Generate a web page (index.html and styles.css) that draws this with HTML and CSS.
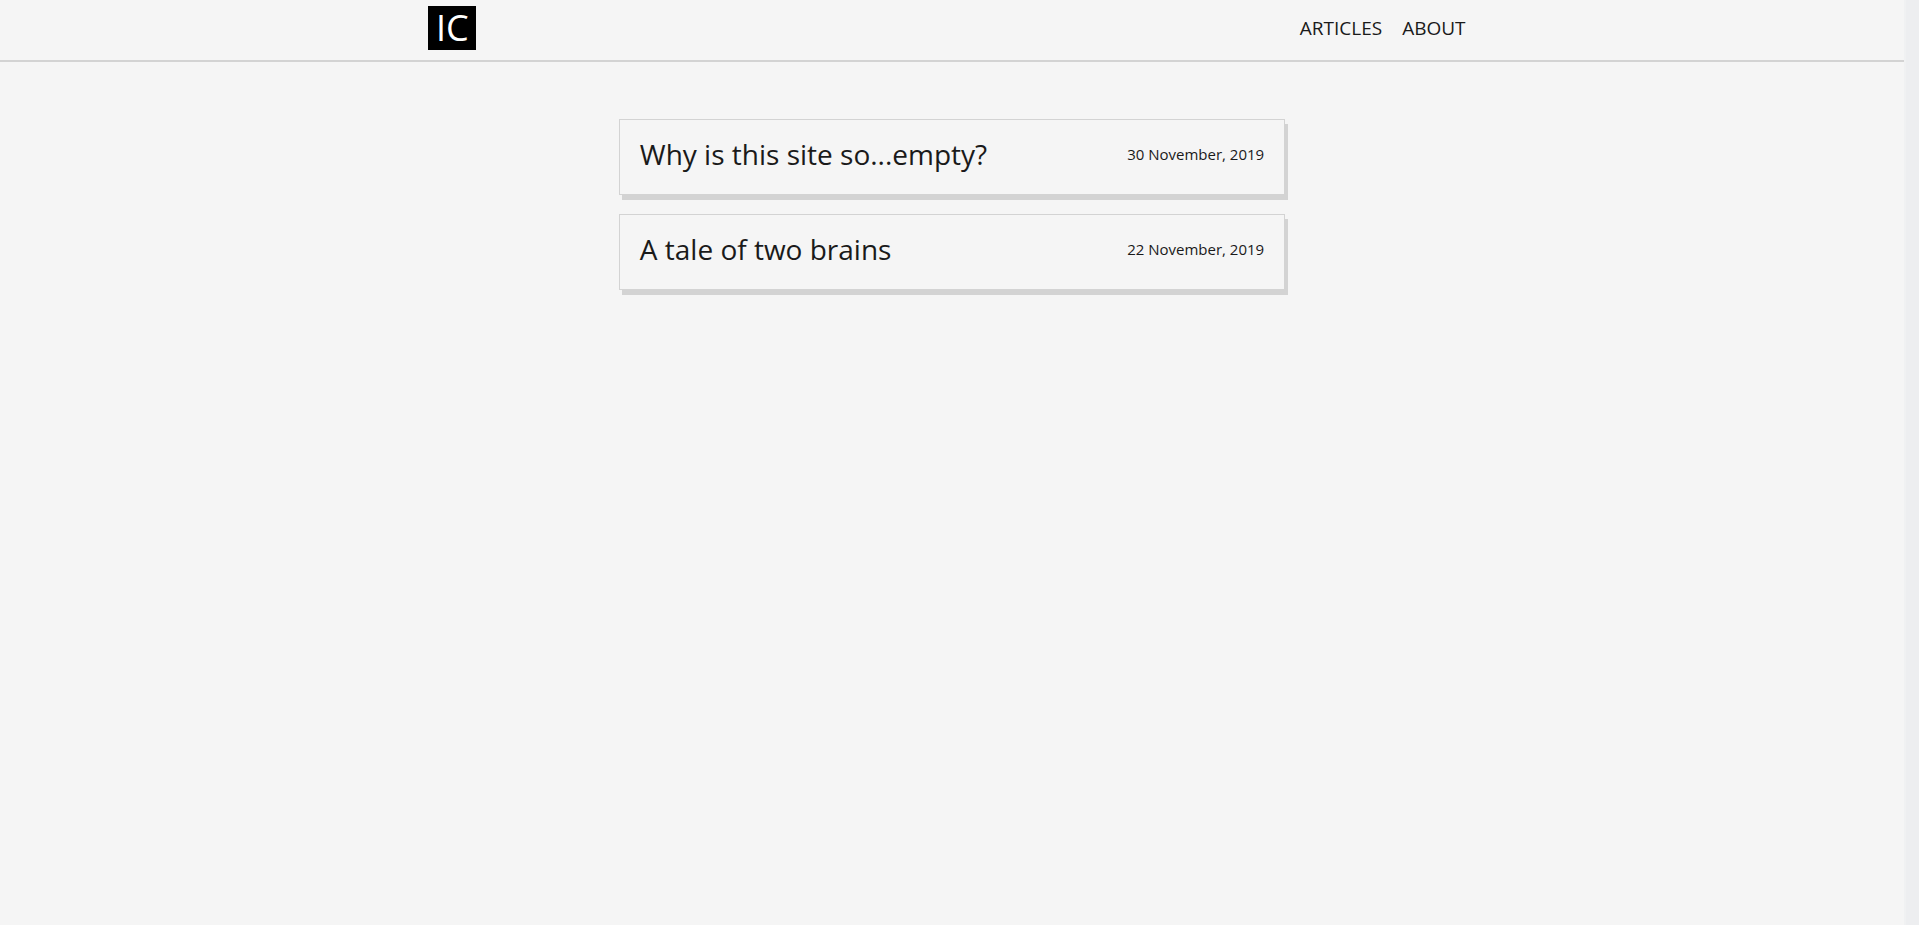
FILE: index.html
```html
<!DOCTYPE html>
<html lang="en">
<head>
<meta charset="utf-8">
<title>Articles</title>
<link rel="stylesheet" href="styles.css">
</head>
<body>
<div class="page">
  <header class="header">
    <div class="header-inner">
      <a class="logo" href="#">IC</a>
      <nav class="nav">
        <a href="#">ARTICLES</a>
        <a href="#">ABOUT</a>
      </nav>
    </div>
  </header>
  <main class="articles">
    <a class="card" href="#">
      <h2>Why is this site so...empty?</h2>
      <time datetime="2019-11-30">30 November, 2019</time>
    </a>
    <a class="card" href="#">
      <h2>A tale of two brains</h2>
      <time datetime="2019-11-22">22 November, 2019</time>
    </a>
  </main>
</div>
<div class="gutter"></div>
</body>
</html>
```

FILE: styles.css
```css
* {
  box-sizing: border-box;
}

body {
  display: flex;
  min-height: 100vh;
  margin: 0;
  background: #f5f5f5;
  color: #1a1a1a;
  font-family: "Open Sans", "Noto Sans", sans-serif;
}

a {
  color: inherit;
  text-decoration: none;
}

.page {
  flex: 1;
}

.gutter {
  width: 15px;
  border-left: 2px solid #f0f1f2;
  background: #edeef0;
}

.header {
  border-bottom: 2px solid #d3d3d3;
}

.header-inner {
  display: flex;
  align-items: center;
  justify-content: space-between;
  width: 55%;
  margin: 0 auto;
  padding: 6px 0 10px;
}

.logo {
  width: 48px;
  background: #000;
  color: #fff;
  font-size: 36px;
  font-weight: 400;
  line-height: 44px;
  text-align: center;
}

.nav {
  display: flex;
  font-size: 19px;
  line-height: 24px;
}

.nav a {
  padding: 0 10px;
}

.articles {
  display: grid;
  gap: 19px;
  width: 35%;
  margin: 57px auto 0;
}

.card {
  display: flex;
  align-items: center;
  justify-content: space-between;
  padding: 14px 20px 20px;
  border: 1px solid #d3d3d3;
  box-shadow: 3px 5px 0 #d3d3d3;
}

.card h2 {
  margin: 0;
  font-size: 28px;
  font-weight: 400;
  line-height: 40px;
}

.card time {
  font-size: 15px;
  line-height: 20px;
}
```
